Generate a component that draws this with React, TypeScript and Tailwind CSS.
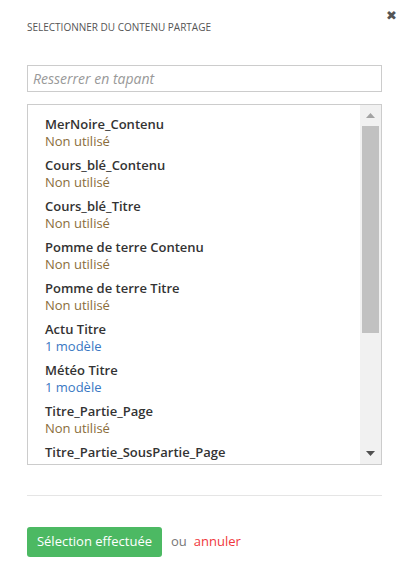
import React from "react";

type SharedItem = {
  name: string;
  usage: string;
  used: boolean;
};

const items: SharedItem[] = [
  { name: "MerNoire_Contenu", usage: "Non utilisé", used: false },
  { name: "Cours_blé_Contenu", usage: "Non utilisé", used: false },
  { name: "Cours_blé_Titre", usage: "Non utilisé", used: false },
  { name: "Pomme de terre Contenu", usage: "Non utilisé", used: false },
  { name: "Pomme de terre Titre", usage: "Non utilisé", used: false },
  { name: "Actu Titre", usage: "1 modèle", used: true },
  { name: "Météo Titre", usage: "1 modèle", used: true },
  { name: "Titre_Partie_Page", usage: "Non utilisé", used: false },
  { name: "Titre_Partie_SousPartie_Page", usage: "Non utilisé", used: false },
];

function FakeScrollbar() {
  return (
    <div className="flex w-[21px] shrink-0 flex-col bg-[#f1f1f1] px-[2px]">
      <div className="flex h-[21px] items-center justify-center">
        <svg width="9" height="5" viewBox="0 0 9 5">
          <polygon points="4.5,0 9,5 0,5" fill="#a3a3a3" />
        </svg>
      </div>
      <div className="h-[207px] bg-[#c1c1c1]" />
      <div className="flex-1" />
      <div className="flex h-[21px] items-center justify-center">
        <svg width="9" height="5" viewBox="0 0 9 5">
          <polygon points="0,0 9,0 4.5,5" fill="#505050" />
        </svg>
      </div>
    </div>
  );
}

export default function App() {
  return (
    <div
      className="relative min-h-[587px] w-[411px] bg-white text-[#333]"
      style={{ fontFamily: '"Open Sans", "Noto Sans", sans-serif' }}
    >
      <button
        className="absolute right-[14px] top-[9px] text-[13px] leading-none text-[#555]"
        aria-label="Fermer"
      >
        ✖
      </button>

      <div className="px-[27px] pt-[20px]">
        <h2 className="text-[10px] leading-[15px] font-normal uppercase text-[#555]">
          Selectionner du contenu partage
        </h2>

        <input
          type="text"
          placeholder="Resserrer en tapant"
          className="mt-[30px] block h-[27px] w-[355px] border border-[#ccc] px-[5px] text-[14px] italic outline-none placeholder:text-[#999]"
        />

        <div className="mt-[12px] flex h-[361px] w-[355px] overflow-hidden border border-[#ccc]">
          <ul className="flex-1 overflow-hidden pl-[17px] pt-[11px]">
            {items.map((item) => (
              <li key={item.name} className="mb-[7px]">
                <div className="text-[13px] leading-[17px] font-semibold text-[#333] whitespace-nowrap">
                  {item.name}
                </div>
                <div
                  className={
                    item.used
                      ? "text-[13px] leading-[17px] text-[#3a78c3]"
                      : "text-[13px] leading-[17px] text-[#8a6d3b]"
                  }
                >
                  {item.usage}
                </div>
              </li>
            ))}
          </ul>
          <FakeScrollbar />
        </div>

        <div className="mt-[30px] h-px w-[355px] bg-[#e5e5e5]" />

        <div className="mt-[31px] flex items-center">
          <button className="h-[30px] w-[135px] rounded-[3px] bg-[#4cb963] text-[13px] text-white">
            Sélection effectuée
          </button>
          <span className="ml-[9px] text-[13px] text-[#777]">ou</span>
          <a href="#" className="ml-[7px] text-[13px] text-[#f0373d]">
            annuler
          </a>
        </div>
      </div>
    </div>
  );
}
